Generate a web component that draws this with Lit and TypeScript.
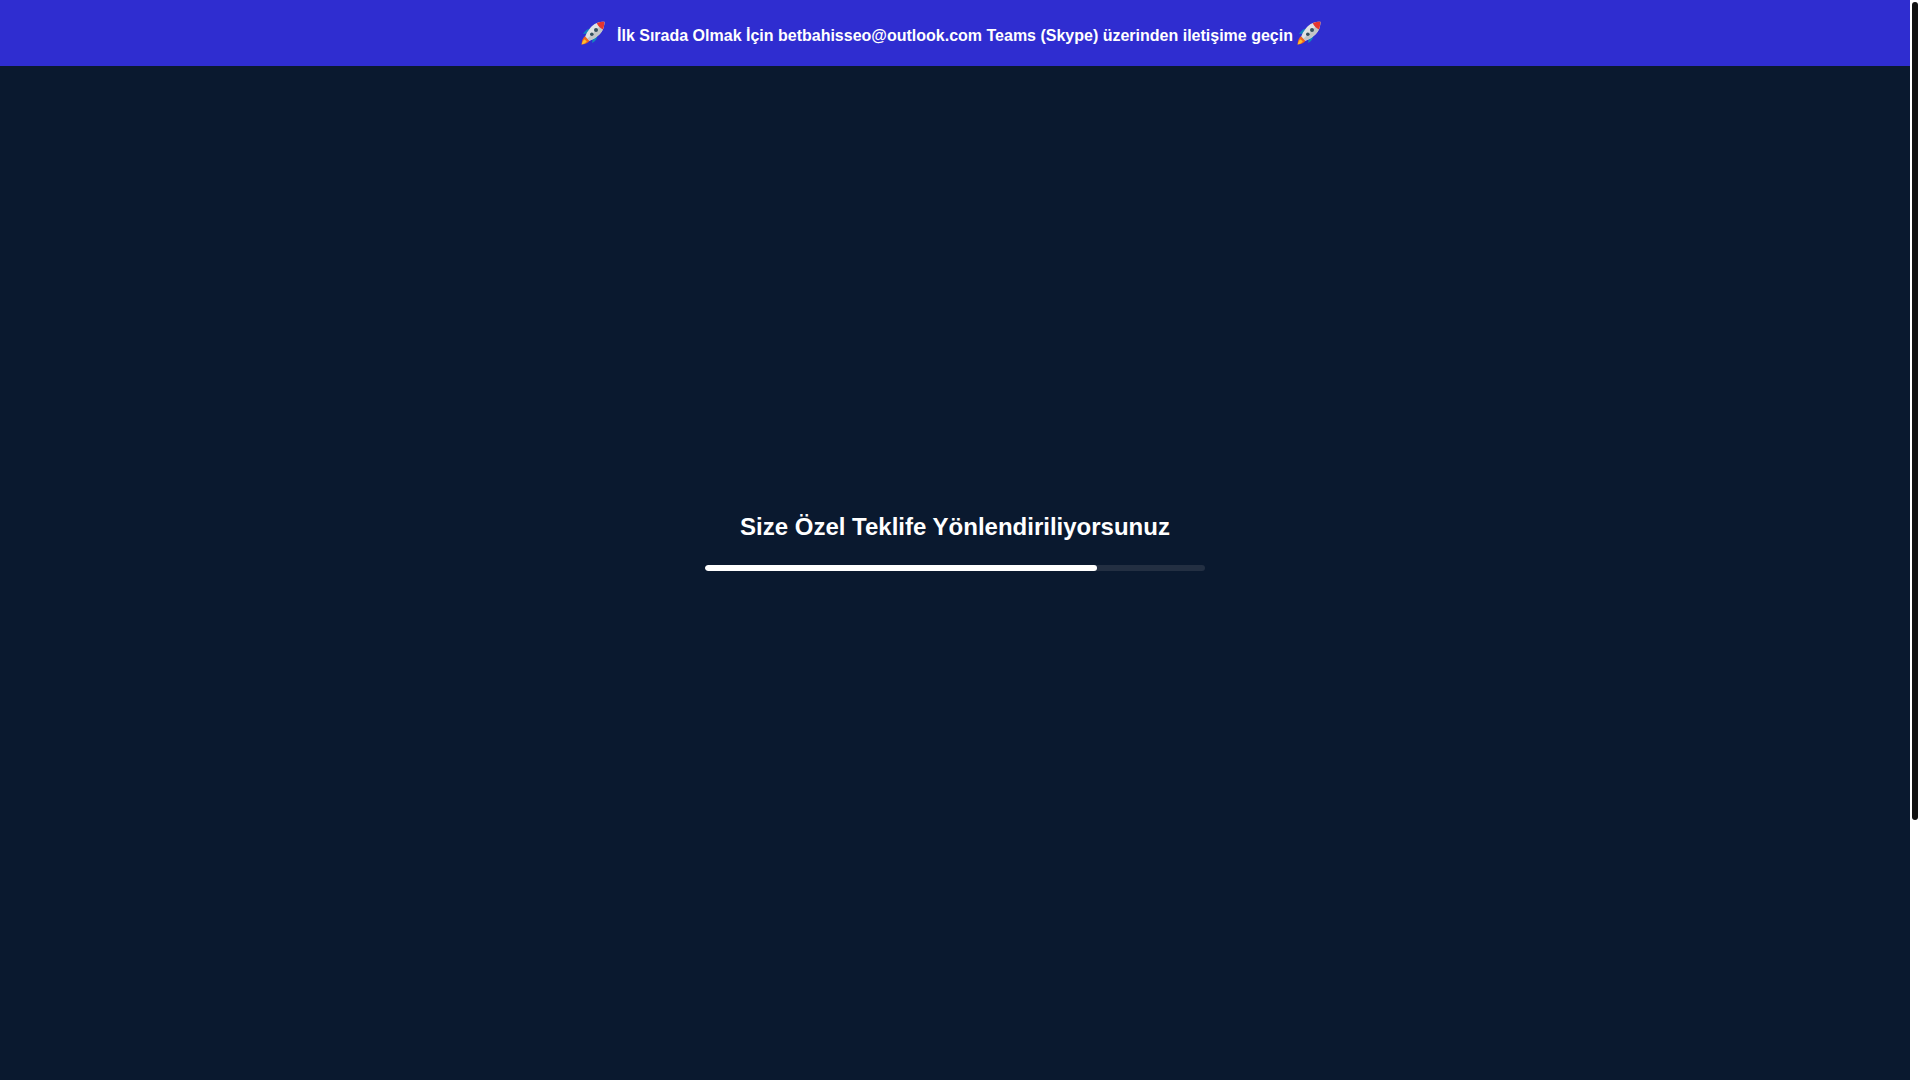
import { LitElement, html, css, svg } from "lit";
import { customElement, property } from "lit/decorators.js";

const rocket = html`
  <svg class="rocket" viewBox="0 0 24 24" role="img" aria-label="🚀">
    ${svg`
      <path d="M9.5 7.6C6.600 8 4 9.600 2 13l5.200-.4z" fill="#1286bd" />
      <path d="M16.400 14.500c-.3 3-1.800 5.500-5.200 7.500l.4-5.400z" fill="#1286bd" />
      <path d="M4.200 15C1.600 16.900.7 20 .6 23.400c3-.2 6.400-1.400 8.200-4z" fill="#f1661c" />
      <path d="M3.600 18.200C2.200 19.600 1.200 21.400.6 23.400c2-.4 4-1.400 5.200-3z" fill="#fdc02f" />
      <path d="M23.400.7C17.600.7 12.600 2.600 9.200 6.900 6.600 10.200 5 13 4.200 15.600l4.200 4.200c3-1 6-2.800 8.800-5.200C21.400 11 23.400 6.600 23.400.7z" fill="#e0e2e3" />
      <path d="M23.400.7 6.400 17.800l2 2c3-1 6-2.800 8.800-5.200C21.400 11 23.400 6.600 23.400.7z" fill="#c2c5c7" />
      <path d="M23.400.7c-2.900 0-5.400.4-7.600 1.300.9 2.700 3.200 5.200 6.200 6.400.9-2.300 1.400-4.800 1.400-7.700z" fill="#e5352f" />
      <circle cx="15" cy="9" r="2" fill="#35515f" />
      <circle cx="10.800" cy="13.200" r="1.800" fill="#35515f" />
    `}
  </svg>
`;

@customElement("notice-banner")
class NoticeBanner extends LitElement {
  static styles = css`
    :host {
      display: block;
      background: #2f2dd0;
      color: #fff;
    }
    .notice {
      display: flex;
      align-items: center;
      justify-content: center;
      gap: 4px;
      min-height: 66px;
      margin: 0;
      padding-right: 8px;
      font-size: 16px;
      line-height: 24px;
      font-weight: 700;
    }
    .rocket {
      width: 24px;
      height: 24px;
    }
    .message {
      padding: 6px 0 0 8px;
    }
  `;

  render() {
    return html`
      <p class="notice">
        ${rocket}
        <span class="message">İlk Sırada Olmak İçin betbahisseo@outlook.com Teams (Skype) üzerinden iletişime geçin</span>
        ${rocket}
      </p>
    `;
  }
}

@customElement("loading-bar")
class LoadingBar extends LitElement {
  @property({ type: Number }) value = 0;

  static styles = css`
    :host {
      display: block;
      width: 500px;
      max-width: 90%;
    }
    .track {
      height: 6px;
      border-radius: 3px;
      background: #232f42;
      overflow: hidden;
    }
    .fill {
      height: 100%;
      border-radius: 3px;
      background: #fff;
    }
  `;

  render() {
    return html`
      <div class="track" role="progressbar" aria-label="Size Özel Teklife Yönlendiriliyorsunuz" aria-valuemin="0" aria-valuemax="100" aria-valuenow=${this.value}>
        <div class="fill" style="width: ${this.value}%"></div>
      </div>
    `;
  }
}

@customElement("app-root")
class AppRoot extends LitElement {
  static styles = css`
    :host {
      display: grid;
      grid-template-columns: 1fr 10px;
      height: 100vh;
      font-family: "Liberation Sans", Arial, sans-serif;
    }
    .page {
      display: flex;
      flex-direction: column;
      background: #0a192f;
    }
    .redirect {
      flex: 1;
      display: flex;
      flex-direction: column;
      align-items: center;
      justify-content: center;
      gap: 24px;
      padding-bottom: 62px;
    }
    .title {
      margin: 0;
      color: #fff;
      font-size: 24px;
      line-height: 28px;
      font-weight: 700;
    }
    .scrollbar {
      padding: 2px;
      background: #fff;
    }
    .thumb {
      height: 76%;
      border-radius: 3px;
      background: #111;
    }
  `;

  render() {
    return html`
      <div class="page">
        <notice-banner></notice-banner>
        <main class="redirect">
          <h1 class="title">Size Özel Teklife Yönlendiriliyorsunuz</h1>
          <loading-bar .value=${78.4}></loading-bar>
        </main>
      </div>
      <div class="scrollbar"><div class="thumb"></div></div>
    `;
  }
}
